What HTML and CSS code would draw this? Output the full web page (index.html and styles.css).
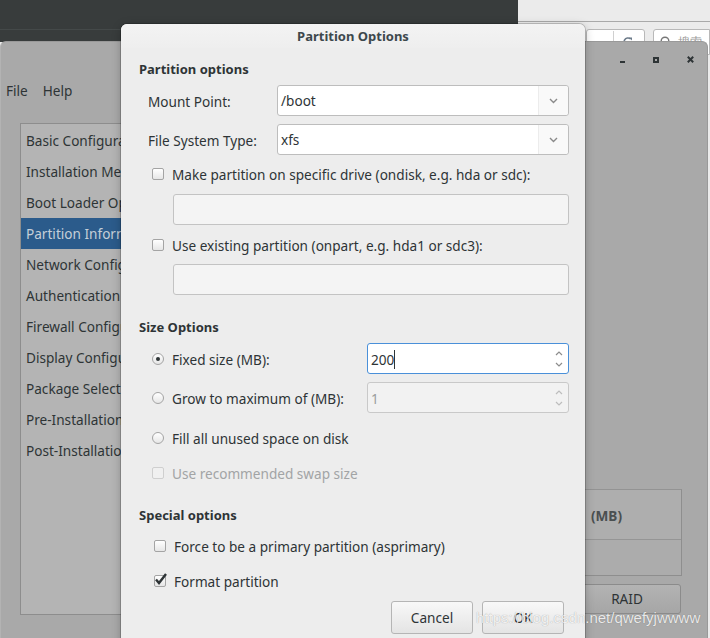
FILE: index.html
```html
<!DOCTYPE html>
<html>
<head>
<meta charset="utf-8">
<title>Partition Options</title>
<link rel="stylesheet" href="styles.css">
</head>
<body>
<div class="desktop">
  <div class="topbar"><div class="topbar-line"></div></div>

  <div class="browser">
    <div class="browser-tabs"></div>
    <div class="browser-toolbar">
      <div class="url-field">
        <span class="url-sep"></span>
        <svg class="reload" width="12" height="12" viewBox="0 0 12 12"><path d="M10 6a4 4 0 1 1-1.3-3" fill="none" stroke="#6d7b8a" stroke-width="1.6"/><path d="M7 1.5h3v3z" fill="#6d7b8a"/></svg>
      </div>
      <div class="search-field">
        <svg class="search-ic" width="12" height="12" viewBox="0 0 12 12"><circle cx="5" cy="5" r="3.8" fill="none" stroke="#777" stroke-width="1.4"/><path d="M8 8l3 3" stroke="#777" stroke-width="1.6"/></svg>
        <span class="search-text">搜索</span>
      </div>
    </div>
  </div>

  <div class="appwin">
    <div class="appwin-titlebar">
      <span class="wbtn wbtn-min"></span>
      <span class="wbtn wbtn-max"></span>
      <svg class="wbtn-close" width="7" height="7" viewBox="0 0 7 7"><path d="M0.8 0.8l5.4 5.4M6.2 0.8l-5.4 5.4" stroke="#2e3436" stroke-width="2"/></svg>
    </div>
    <div class="appwin-menubar"><span>File</span><span>Help</span></div>
    <div class="appwin-body">
      <ul class="navlist">
        <li>Basic Configuration</li>
        <li>Installation Method</li>
        <li>Boot Loader Options</li>
        <li class="selected">Partition Information</li>
        <li>Network Configuration</li>
        <li>Authentication</li>
        <li>Firewall Configuration</li>
        <li>Display Configuration</li>
        <li>Package Selection</li>
        <li>Pre-Installation Script</li>
        <li>Post-Installation Script</li>
      </ul>
      <div class="appwin-main">
        <div class="parttable">
          <div class="parttable-head"><span class="col-mb">(MB)</span></div>
          <div class="parttable-body"></div>
        </div>
        <div class="raid-row"><span class="raid-btn">RAID</span></div>
      </div>
    </div>
  </div>

  <div class="dialog">
    <div class="dlg-title">Partition Options</div>
    <div class="dlg-body">
      <div class="sec-head sec-first">Partition options</div>

      <div class="form-row">
        <span class="field-label">Mount Point:</span>
        <div class="combo">
          <span class="combo-text">/boot</span>
          <span class="combo-btn"><svg width="9" height="6" viewBox="0 0 9 6"><path d="M1 1l3.5 3.5L8 1" fill="none" stroke="#8a8a8a" stroke-width="1.4"/></svg></span>
        </div>
      </div>
      <div class="form-row row-gap">
        <span class="field-label">File System Type:</span>
        <div class="combo">
          <span class="combo-text">xfs</span>
          <span class="combo-btn"><svg width="9" height="6" viewBox="0 0 9 6"><path d="M1 1l3.5 3.5L8 1" fill="none" stroke="#8a8a8a" stroke-width="1.4"/></svg></span>
        </div>
      </div>

      <div class="check-row cr-1"><span class="cbox"></span><span>Make partition on specific drive (ondisk, e.g. hda or sdc):</span></div>
      <div class="entry entry-1"></div>
      <div class="check-row cr-2"><span class="cbox"></span><span>Use existing partition (onpart, e.g. hda1 or sdc3):</span></div>
      <div class="entry entry-2"></div>

      <div class="sec-head sec-size">Size Options</div>

      <div class="radio-row rr-fixed">
        <span class="radio-label"><span class="radio checked"></span><span>Fixed size (MB):</span></span>
        <div class="spin focused">
          <span class="spin-text">200<span class="caret"></span></span>
          <span class="spin-arrows">
            <svg width="8" height="5" viewBox="0 0 8 5"><path d="M1 4l3-3 3 3" fill="none" stroke="#8c8c8c" stroke-width="1.2"/></svg>
            <svg width="8" height="5" viewBox="0 0 8 5"><path d="M1 1l3 3 3-3" fill="none" stroke="#8c8c8c" stroke-width="1.2"/></svg>
          </span>
        </div>
      </div>
      <div class="radio-row rr-grow">
        <span class="radio-label"><span class="radio"></span><span>Grow to maximum of (MB):</span></span>
        <div class="spin disabled">
          <span class="spin-text">1</span>
          <span class="spin-arrows">
            <svg width="8" height="5" viewBox="0 0 8 5"><path d="M1 4l3-3 3 3" fill="none" stroke="#bdbdbd" stroke-width="1.2"/></svg>
            <svg width="8" height="5" viewBox="0 0 8 5"><path d="M1 1l3 3 3-3" fill="none" stroke="#bdbdbd" stroke-width="1.2"/></svg>
          </span>
        </div>
      </div>
      <div class="check-row cr-fill"><span class="radio"></span><span>Fill all unused space on disk</span></div>
      <div class="check-row cr-swap disabled"><span class="cbox"></span><span>Use recommended swap size</span></div>

      <div class="sec-head sec-special">Special options</div>
      <div class="check-row cr-force special"><span class="cbox"></span><span>Force to be a primary partition (asprimary)</span></div>
      <div class="check-row cr-format special">
        <span class="cbox checked"><svg width="14" height="13" viewBox="0 0 14 13"><path d="M2 6.5l3 3.5L12 1" fill="none" stroke="#2e3436" stroke-width="2.4"/></svg></span>
        <span>Format partition</span>
      </div>

      <div class="dlg-buttons">
        <span class="btn">Cancel</span>
        <span class="btn">OK</span>
      </div>
    </div>
  </div>

  <div class="watermark">https://blog.csdn.net/qwefyjwwww</div>
</div>
</body>
</html>
```

FILE: styles.css
```css
* { box-sizing: border-box; }
html, body { margin: 0; padding: 0; }
body {
  width: 710px;
  height: 638px;
  overflow: hidden;
  background: #ebebeb;
  font-family: "Noto Sans", "Open Sans", sans-serif;
  font-size: 13.6px;
  color: #2e3436;
}
.desktop { position: relative; width: 710px; height: 638px; overflow: hidden; }

/* top panel */
.topbar { position: absolute; left: 0; top: 0; width: 518px; height: 42px; background: #383c3c; }
.topbar-line { margin-top: 29px; height: 1px; background: #444949; }

/* browser window behind */
.browser { position: absolute; left: 518px; top: 0; right: 0; height: 60px; background: #ebebeb; }
.browser-tabs { height: 22px; border-bottom: 1px solid #a9a9a9; }
.browser-toolbar { display: flex; gap: 8px; padding: 7px 0 0 68px; }
.url-field {
  width: 59px; height: 26px; background: #fff;
  border: 1px solid #b8b8b8; border-radius: 3px;
  display: flex; align-items: center; padding-left: 26px; gap: 8px;
}
.url-sep { width: 1px; height: 22px; background: #d0d0d0; }
.search-field {
  flex: 1; height: 26px; background: #fff;
  border: 1px solid #b8b8b8; border-radius: 3px 0 0 3px;
  display: flex; align-items: center; gap: 6px; padding-left: 6px;
  font-size: 12px; color: #999;
}

/* application window behind the dialog */
.appwin {
  position: absolute; left: 0; top: 41px; width: 708px; height: 600px;
  background: #a9a9a9; border-radius: 6px 6px 0 0;
  border-top: 1px solid #999; border-left: 1px solid #b3b3b3; border-right: 1px solid #999;
}
.appwin-titlebar {
  height: 35px; display: flex; align-items: center; justify-content: flex-end;
  gap: 28px; padding-right: 13px;
}
.wbtn { display: block; }
.wbtn-min { width: 5px; height: 2px; background: #2e3436; margin-top: 4px; }
.wbtn-max { width: 6px; height: 6px; border: 2px solid #2e3436; }
.wbtn-close { display: block; }
.appwin-menubar { height: 26px; display: flex; align-items: center; gap: 15px; padding-left: 5px; color: #2e3436; }
.appwin-body { display: flex; height: 513px; padding: 20px 25px 0 19px; }
.navlist {
  list-style: none; margin: 0; padding: 1px 0 0;
  width: 240px; height: 492px; flex: none;
  background: #b4b4b4; border: 1px solid #8d8d8d;
}
.navlist li { height: 31px; line-height: 31px; padding-left: 5px; white-space: nowrap; color: #2e3436; }
.navlist li.selected { background: #2b5b8b; color: #c5cfd9; }
.appwin-main { flex: 1; display: flex; flex-direction: column; justify-content: flex-end; padding-bottom: 2px; margin-left: 30px; }
.parttable { border: 1px solid #8e8e8e; border-top-color: #939393; background: #aeaeae; }
.parttable-head {
  height: 50px; display: flex; align-items: center; justify-content: flex-end;
  padding-right: 59px; padding-top: 2px;
  border-bottom: 1px solid #959595; color: #4a4f50; font-weight: bold; font-size: 13.6px;
}
.parttable-body { height: 35px; background: #acacac; }
.raid-row { display: flex; justify-content: flex-end; margin-top: 8px; padding-right: 1px; }
.raid-btn {
  width: 108px; height: 30px; line-height: 28px; text-align: center;
  border: 1px solid #8b8b8b; border-radius: 3px;
  background: linear-gradient(#b3b3b3, #a6a6a6); color: #2e3436;
}

/* dialog */
.dialog {
  position: absolute; left: 121px; top: 24px; width: 464px; height: 630px;
  background: #ededed; border-radius: 6px 6px 0 0;
  box-shadow: 0 0 0 1px rgba(0,0,0,0.18), 0 2px 10px rgba(0,0,0,0.25);
}
.dlg-title {
  height: 24px; line-height: 24px; text-align: center;
  font-weight: bold; font-size: 13px; color: #3d484c;
  background: linear-gradient(#f3f3f3, #eeeeee); border-radius: 6px 6px 0 0;
}
.dlg-body { padding: 0 16px 0 18px; }
.sec-head { height: 20px; line-height: 20px; font-weight: bold; font-size: 13px; color: #2e3436; }
.sec-first { margin-top: 11px; }
.sec-size { margin-top: 22px; }
.sec-special { margin-top: 22px; }

.form-row { display: flex; align-items: center; margin-top: 6px; padding-left: 9px; }
.form-row.row-gap { margin-top: 8px; }
.field-label { width: 129px; flex: none; padding-top: 1px; }
.combo {
  flex: 1; height: 31px; display: flex;
  background: #fff; border: 1px solid #bdbdbd; border-radius: 3px;
}
.combo-text { flex: 1; line-height: 30px; padding-left: 3px; }
.combo-btn {
  width: 30px; display: flex; align-items: center; justify-content: center;
  border-left: 1px solid #ececec; background: #f9f9f9; border-radius: 0 3px 3px 0;
}

.check-row { display: flex; align-items: center; gap: 8px; height: 20px; padding-left: 13px; }
.check-row.special { padding-left: 15px; }
.cr-1 { margin-top: 9px; }
.cr-2 { margin-top: 10px; }
.cr-fill { margin-top: 15px; }
.cr-swap { margin-top: 15px; }
.cr-force { margin-top: 11px; }
.cr-format { margin-top: 15px; }
.check-row.disabled { color: #a2a4a5; }

.cbox {
  width: 12px; height: 12px; flex: none; position: relative;
  border: 1px solid #a4a4a4; border-radius: 2px;
  background: linear-gradient(#ffffff, #e6e6e6);
}
.disabled .cbox { border-color: #cfcfcf; background: #f0f0f0; }
.cbox.checked svg { position: absolute; left: -1px; top: -3px; }

.radio {
  width: 12px; height: 12px; flex: none; border-radius: 50%;
  border: 1px solid #a4a4a4; background: linear-gradient(#ffffff, #e6e6e6);
  display: flex; align-items: center; justify-content: center;
}
.radio.checked::after { content: ""; width: 4px; height: 4px; border-radius: 50%; background: #2e3436; }

.entry {
  height: 31px; margin-left: 34px;
  background: #f4f4f4; border: 1px solid #c3c3c3; border-radius: 3px;
}
.entry-1 { margin-top: 10px; }
.entry-2 { margin-top: 9px; }

.radio-row { display: flex; align-items: center; padding-left: 13px; }
.rr-fixed { margin-top: 6px; }
.rr-grow { margin-top: 8px; }
.radio-label { width: 215px; flex: none; display: flex; align-items: center; gap: 8px; padding-top: 1px; }
.spin {
  flex: 1; height: 31px; display: flex; border-radius: 3px;
  border: 1px solid #c0c0c0; background: #fff;
}
.spin.focused { border-color: #4a90d9; }
.spin.disabled { background: #f2f2f2; border-color: #c9c9c9; color: #9a9c9d; }
.spin-text { flex: 1; line-height: 29px; padding-left: 3px; padding-top: 1px; display: flex; align-items: center; }
.caret { display: inline-block; width: 1px; height: 19px; background: #2e3436; margin-left: 0; }
.spin-arrows { width: 16px; display: flex; flex-direction: column; justify-content: center; gap: 6px; align-items: center; padding-right: 2px; }
.spin-arrows svg { display: block; }

.dlg-buttons { display: flex; justify-content: flex-end; gap: 9px; margin-top: 10px; padding-right: 5px; }
.btn {
  width: 82px; height: 33px; line-height: 32px; text-align: center;
  border: 1px solid #b5b5b5; border-radius: 3px;
  background: linear-gradient(#f8f8f8, #e4e4e4); color: #2e3436;
}

.watermark {
  position: absolute; left: 476px; top: 609px;
  font-family: "Liberation Sans", Arial, sans-serif; font-size: 15px;
  color: rgba(255,255,255,0.85);
  text-shadow: 0 0 1px rgba(0,0,0,0.35);
  white-space: nowrap; pointer-events: none;
}
```
